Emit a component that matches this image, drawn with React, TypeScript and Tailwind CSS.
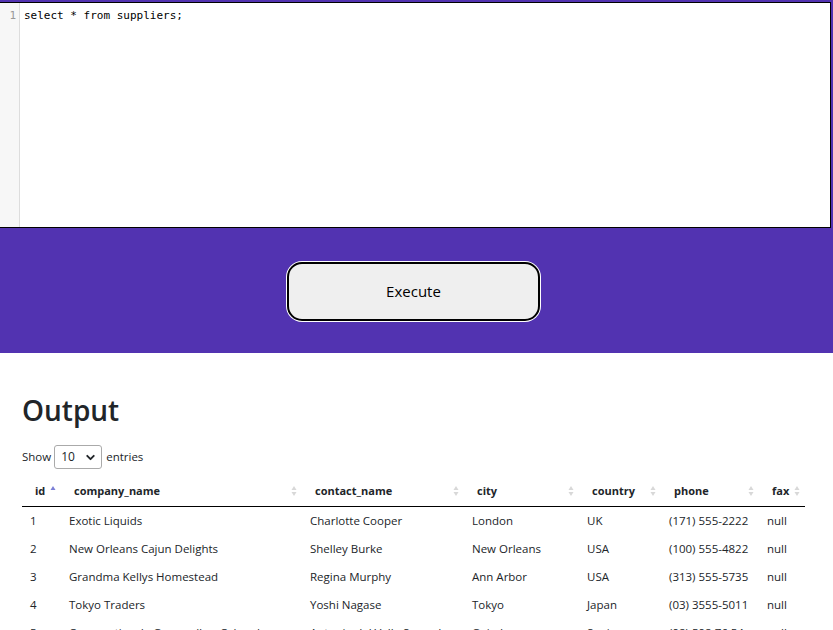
import { ChevronDown } from 'lucide-react'

type Supplier = {
  id: number
  company: string
  contact: string
  city: string
  country: string
  phone: string
}

const suppliers: Supplier[] = [
  { id: 1, company: 'Exotic Liquids', contact: 'Charlotte Cooper', city: 'London', country: 'UK', phone: '(171) 555-2222' },
  { id: 2, company: 'New Orleans Cajun Delights', contact: 'Shelley Burke', city: 'New Orleans', country: 'USA', phone: '(100) 555-4822' },
  { id: 3, company: 'Grandma Kellys Homestead', contact: 'Regina Murphy', city: 'Ann Arbor', country: 'USA', phone: '(313) 555-5735' },
  { id: 4, company: 'Tokyo Traders', contact: 'Yoshi Nagase', city: 'Tokyo', country: 'Japan', phone: '(03) 3555-5011' },
  { id: 5, company: "Cooperativa de Quesos 'Las Cabras'", contact: 'Antonio del Valle Saavedra', city: 'Oviedo', country: 'Spain', phone: '(98) 598 76 54' },
]

const columns = [
  { key: 'id', width: 39 },
  { key: 'company_name', width: 241 },
  { key: 'contact_name', width: 162 },
  { key: 'city', width: 115 },
  { key: 'country', width: 82 },
  { key: 'phone', width: 98 },
  { key: 'fax', width: 46 },
]

function SortIcon({ active }: { active?: boolean }) {
  return (
    <svg width="6" height="11" viewBox="0 0 6 11" className="absolute right-[5px] top-1/2 -translate-y-1/2">
      <path d="M3 0.5 L5.5 4.5 H0.5 Z" fill={active ? '#7b7fd6' : '#d8d8d8'} />
      {!active && <path d="M3 10.5 L5.5 6.5 H0.5 Z" fill="#d8d8d8" />}
    </svg>
  )
}

function Editor() {
  return (
    <div className="mt-[2px] flex h-[226px] w-[831px] border-y border-r border-black bg-white">
      <div className="w-[20px] border-r border-[#ddd] bg-[#f7f7f7] pr-[3px] pt-[5px] text-right font-['DejaVu_Sans_Mono',monospace] text-[11px] leading-[15px] text-[#999]">
        1
      </div>
      <div className="pl-[4px] pt-[5px] font-['DejaVu_Sans_Mono',monospace] text-[11px] leading-[15px] text-black">
        select * from suppliers;
      </div>
    </div>
  )
}

export default function App() {
  return (
    <div className="font-['Open_Sans',sans-serif] text-[#212529]">
      <section className="flex h-[353px] flex-col items-start bg-[#5233b1]">
        <Editor />
        <div className="flex w-full justify-center pt-[34px]">
          <button className="ml-[-6px] h-[59px] w-[253px] rounded-[15px] border-2 border-black bg-[#efefef] text-[15px] text-black shadow-[0_0_0_1px_#fff]">
            Execute
          </button>
        </div>
      </section>

      <section className="px-[22px] pt-[39px]">
        <h2 className="text-[28px] leading-[36px] font-semibold">Output</h2>

        <div className="mt-[17px] flex items-center text-[11.5px]">
          <span>Show</span>
          <div className="ml-[3px] mr-[4px] flex h-[24px] w-[48px] items-center justify-between rounded-[3px] border border-[#aaa] bg-white pl-[6px] pr-[4px] text-[12px]">
            <span>10</span>
            <ChevronDown size={13} strokeWidth={3.5} />
          </div>
          <span>entries</span>
        </div>

        <table className="mt-[7px] w-[783px] table-fixed border-collapse text-[11.5px]">
          <colgroup>
            {columns.map((c) => (
              <col key={c.key} style={{ width: c.width }} />
            ))}
          </colgroup>
          <thead>
            <tr className="border-b border-black">
              {columns.map((c, i) => (
                <th key={c.key} className="relative h-[30px] pl-[13px] text-left text-[11px] font-bold">
                  {c.key}
                  <SortIcon active={i === 0} />
                </th>
              ))}
            </tr>
          </thead>
          <tbody>
            {suppliers.map((s) => (
              <tr key={s.id} className="h-[28px]">
                <td className="pl-[8px] pt-[1px]">{s.id}</td>
                <td className="pl-[8px] pt-[1px] whitespace-nowrap">{s.company}</td>
                <td className="pl-[8px] pt-[1px] whitespace-nowrap">{s.contact}</td>
                <td className="pl-[8px] pt-[1px]">{s.city}</td>
                <td className="pl-[8px] pt-[1px]">{s.country}</td>
                <td className="pl-[8px] pt-[1px] whitespace-nowrap">{s.phone}</td>
                <td className="pl-[8px] pt-[1px]">null</td>
              </tr>
            ))}
          </tbody>
        </table>
      </section>
    </div>
  )
}
